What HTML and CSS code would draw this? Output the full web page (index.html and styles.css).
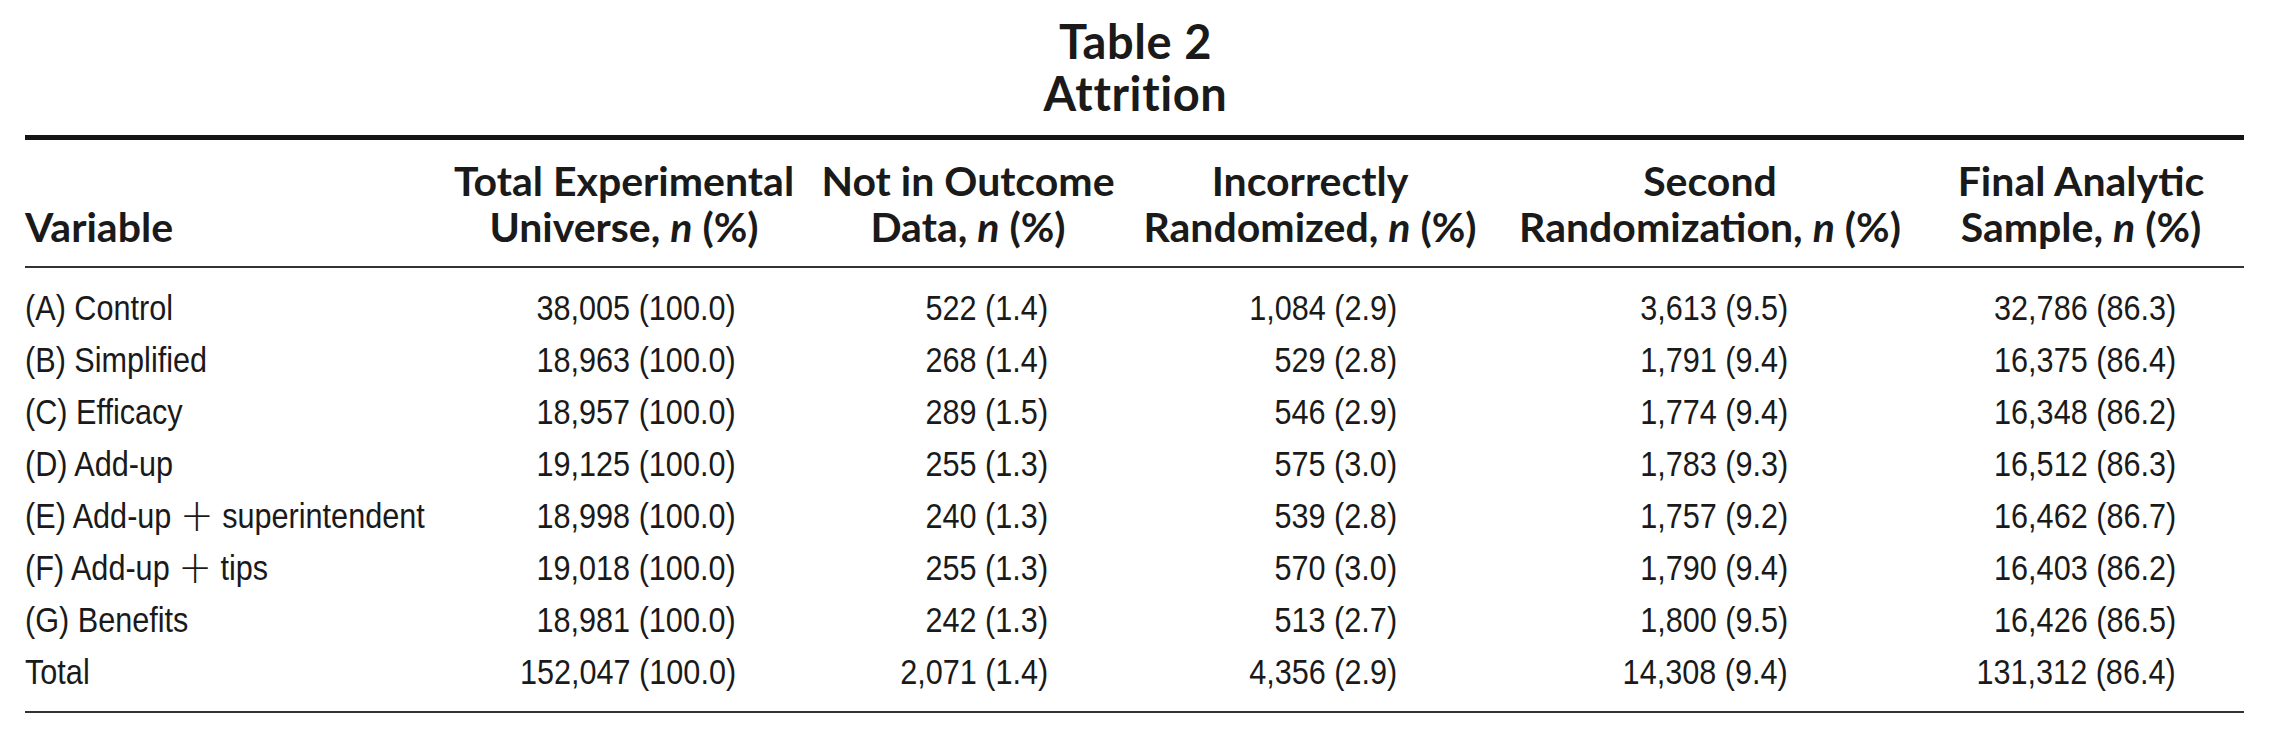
FILE: index.html
```html
<!DOCTYPE html>
<html lang="en">
<head>
<meta charset="utf-8">
<title>Table 2 Attrition</title>
<link rel="stylesheet" href="styles.css">
</head>
<body>
<div class="page">
  <h1 class="title">Table 2<br>Attrition</h1>
  <table class="tbl">
    <colgroup>
      <col class="c0"><col class="c1"><col class="c2"><col class="c3"><col class="c4"><col class="c5">
    </colgroup>
    <thead>
      <tr>
        <th class="h-var">Variable</th>
        <th>Total Experimental<br>Universe, <i>n</i> (%)</th>
        <th>Not in Outcome<br>Data, <i>n</i> (%)</th>
        <th>Incorrectly<br>Randomized, <i>n</i> (%)</th>
        <th>Second<br>Randomization, <i>n</i> (%)</th>
        <th class="h-last">Final Analytic<br>Sample, <i>n</i> (%)</th>
      </tr>
    </thead>
    <tbody>
      <tr><td><span>(A) Control</span></td><td><span>38,005 (100.0)</span></td><td><span>522 (1.4)</span></td><td><span>1,084 (2.9)</span></td><td><span>3,613 (9.5)</span></td><td><span>32,786 (86.3)</span></td></tr>
      <tr><td><span>(B) Simplified</span></td><td><span>18,963 (100.0)</span></td><td><span>268 (1.4)</span></td><td><span>529 (2.8)</span></td><td><span>1,791 (9.4)</span></td><td><span>16,375 (86.4)</span></td></tr>
      <tr><td><span>(C) Efficacy</span></td><td><span>18,957 (100.0)</span></td><td><span>289 (1.5)</span></td><td><span>546 (2.9)</span></td><td><span>1,774 (9.4)</span></td><td><span>16,348 (86.2)</span></td></tr>
      <tr><td><span>(D) Add-up</span></td><td><span>19,125 (100.0)</span></td><td><span>255 (1.3)</span></td><td><span>575 (3.0)</span></td><td><span>1,783 (9.3)</span></td><td><span>16,512 (86.3)</span></td></tr>
      <tr><td><span>(E) Add-up <b class="plus">+</b> superintendent</span></td><td><span>18,998 (100.0)</span></td><td><span>240 (1.3)</span></td><td><span>539 (2.8)</span></td><td><span>1,757 (9.2)</span></td><td><span>16,462 (86.7)</span></td></tr>
      <tr><td><span>(F) Add-up <b class="plus">+</b> tips</span></td><td><span>19,018 (100.0)</span></td><td><span>255 (1.3)</span></td><td><span>570 (3.0)</span></td><td><span>1,790 (9.4)</span></td><td><span>16,403 (86.2)</span></td></tr>
      <tr><td><span>(G) Benefits</span></td><td><span>18,981 (100.0)</span></td><td><span>242 (1.3)</span></td><td><span>513 (2.7)</span></td><td><span>1,800 (9.5)</span></td><td><span>16,426 (86.5)</span></td></tr>
      <tr><td><span>Total</span></td><td><span>152,047 (100.0)</span></td><td><span>2,071 (1.4)</span></td><td><span>4,356 (2.9)</span></td><td><span>14,308 (9.4)</span></td><td><span>131,312 (86.4)</span></td></tr>
    </tbody>
  </table>
</div>
</body>
</html>
```
FILE: styles.css
```css
html, body {
  margin: 0;
  padding: 0;
  background: #ffffff;
}

.page {
  width: 2271px;
  padding-top: 15px;
  color: #1a1a1a;
}

.title {
  margin: 0 0 16px 0;
  font-family: Lato, "Noto Sans", sans-serif;
  font-weight: 700;
  font-size: 47px;
  letter-spacing: 0.6px;
  line-height: 52px;
  text-align: center;
  color: #1a1a1a;
}

.tbl {
  margin-left: 25px;
  width: 2219px;
  table-layout: fixed;
  border-collapse: collapse;
  border-top: 5px solid #151515;
  border-bottom: 2px solid #333333;
}

.c0 { width: 419px; }
.c1 { width: 360px; }
.c2 { width: 328px; }
.c3 { width: 356px; }
.c4 { width: 444px; }
.c5 { width: 312px; }

.tbl thead th {
  font-family: Lato, "Noto Sans", sans-serif;
  font-weight: 700;
  font-size: 41px;
  line-height: 46px;
  text-align: center;
  white-space: nowrap;
  vertical-align: bottom;
  padding: 18px 0 16px 0;
  border-bottom: 2px solid #333333;
  color: #1a1a1a;
}

.tbl thead th i {
  font-style: italic;
}

.tbl thead th.h-var {
  text-align: left;
}

.tbl thead th.h-last {
  padding-right: 14px;
}

.tbl tbody td {
  font-family: "Liberation Sans", Arial, sans-serif;
  font-size: 35px;
  line-height: 52px;
  padding: 0;
  text-align: right;
  white-space: nowrap;
  color: #1a1a1a;
}

.tbl tbody td span {
  display: inline-block;
  transform: scaleX(0.875);
  transform-origin: right center;
}

.tbl tbody td .plus {
  font-family: "DejaVu Sans", sans-serif;
  font-weight: 200;
  font-size: 46px;
  line-height: 0;
  vertical-align: -3px;
}

.tbl tbody tr:first-child td { padding-top: 14px; }
.tbl tbody tr:last-child td { padding-bottom: 13px; }

.tbl tbody td:nth-child(1) { text-align: left; }
.tbl tbody td:nth-child(1) span { transform-origin: left center; }
.tbl tbody td:nth-child(2) { padding-right: 68px; }
.tbl tbody td:nth-child(3) { padding-right: 84px; }
.tbl tbody td:nth-child(4) { padding-right: 91px; }
.tbl tbody td:nth-child(5) { padding-right: 144px; }
.tbl tbody td:nth-child(6) { padding-right: 68px; }
```
